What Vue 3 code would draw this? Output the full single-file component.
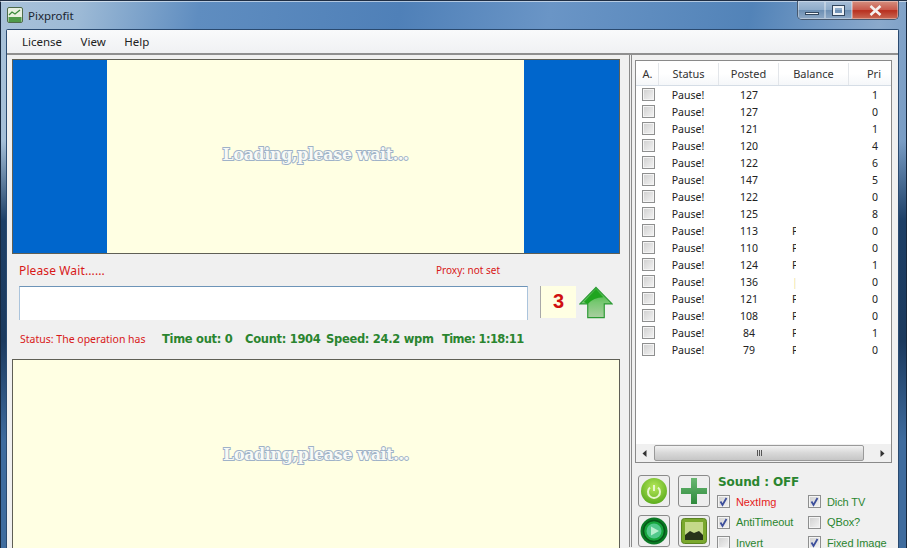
<script setup>
const rows = [
  ['127', '', '1'], ['127', '', '0'], ['121', '', '1'], ['120', '', '4'], ['122', '', '6'],
  ['147', '', '5'], ['122', '', '0'], ['125', '', '8'], ['113', 'P', '0'], ['110', 'P', '0'],
  ['124', 'P', '1'], ['136', 'y', '0'], ['121', 'P', '0'], ['108', 'P', '0'], ['84', 'P', '1'], ['79', 'P', '0']
]
const checks = [
  { label: 'NextImg', on: true, red: true },
  { label: 'Dich TV', on: true },
  { label: 'AntiTimeout', on: true },
  { label: 'QBox?', on: false },
  { label: 'Invert', on: false },
  { label: 'Fixed Image', on: true }
]
</script>

<template>
  <div class="window">
    <header class="titlebar">
      <svg class="appicon" width="16" height="16" viewBox="0 0 16 16">
        <rect x="0.5" y="0.5" width="15" height="15" rx="1.5" fill="#e8f0e0" stroke="#4d6b4a" />
        <rect x="1.5" y="10" width="13" height="5" fill="#4f9a4a" />
        <path d="M2 8 L5 5 L8 7 L13 3" fill="none" stroke="#3b8a3b" stroke-width="1.3" />
      </svg>
      <span class="apptitle">Pixprofit</span>
      <div class="caption">
        <div class="capbtn min"><i></i></div>
        <div class="capbtn max"><i></i></div>
        <div class="capbtn close">
          <svg width="13" height="11" viewBox="0 0 13 11"><path d="M1.5 1 L11.5 10 M11.5 1 L1.5 10" stroke="#f4f0ee" stroke-width="2.6" /></svg>
        </div>
      </div>
    </header>

    <div class="client">
      <nav class="menu"><span>License</span><span>View</span><span>Help</span></nav>
      <div class="body">
        <section class="left">
          <div class="adbox">
            <div class="adcream"><span class="loading">Loading,please wait...</span></div>
          </div>
          <div class="waitrow">
            <span class="wait">Please Wait......</span>
            <span class="proxy">Proxy: not set</span>
          </div>
          <div class="inputrow">
            <div class="input"></div>
            <div class="counter">3</div>
            <svg class="arrow" width="34" height="33" viewBox="0 0 35 33">
              <defs>
                <linearGradient id="arrowg" x1="0" y1="0" x2="0" y2="1">
                  <stop offset="0" stop-color="#2fae2f" />
                  <stop offset="0.5" stop-color="#78c872" />
                  <stop offset="1" stop-color="#a9cfa0" />
                </linearGradient>
              </defs>
              <path d="M17.5 1 L34 18 L26 18 L26 32 L9 32 L9 18 L1 18 Z" fill="url(#arrowg)" stroke="#2c9a34" stroke-width="1.2" />
              <path d="M9 18 Q15 11 25 11 L17.5 3 L5 16 Z" fill="#1fa51f" />
            </svg>
          </div>
          <div class="statusrow">
            <span class="status">Status: The operation has</span>
            <span class="stat timeout">Time out: 0</span>
            <span class="stat count">Count: 1904</span>
            <span class="stat speed">Speed: 24.2 wpm</span>
            <span class="stat time">Time: 1:18:11</span>
          </div>
          <div class="bottombox"><span class="loading">Loading,please wait...</span></div>
        </section>

        <aside class="right">
          <div class="list">
            <div class="thead">
              <span class="c-a">A.</span><span class="c-s">Status</span><span class="c-p">Posted</span><span class="c-b">Balance</span><span class="c-r">Pri</span>
            </div>
            <div class="tbody">
              <div v-for="(r, i) in rows" :key="i" class="row">
                <span class="c-a"><i class="cb"></i></span>
                <span class="c-s">Pause!</span>
                <span class="c-p">{{ r[0] }}</span>
                <span class="c-b"><em :class="{ pale: r[1] === 'y' }">{{ r[1] === 'y' ? '|' : r[1] }}</em></span>
                <span class="c-r">{{ r[2] }}</span>
              </div>
            </div>
            <div class="hscroll">
              <svg width="5" height="7" viewBox="0 0 5 7"><path d="M4.5 0 V7 L0.5 3.5 Z" fill="#333" /></svg>
              <div class="thumb"><b></b><b></b><b></b></div>
              <svg width="5" height="7" viewBox="0 0 5 7"><path d="M0.5 0 V7 L4.5 3.5 Z" fill="#333" /></svg>
            </div>
          </div>
          <div class="controls">
            <div class="btns">
              <div class="tool">
                <svg width="28" height="28" viewBox="0 0 28 28">
                  <defs><radialGradient id="pw" cx="0.5" cy="0.35" r="0.7"><stop offset="0" stop-color="#b6e85a" /><stop offset="1" stop-color="#55a818" /></radialGradient></defs>
                  <circle cx="14" cy="14" r="13" fill="url(#pw)" />
                  <path d="M10 10.5 A6 6 0 1 0 18 10.5" fill="none" stroke="#e7f7cf" stroke-width="2" />
                  <path d="M14 8 V14" stroke="#e7f7cf" stroke-width="2" />
                </svg>
              </div>
              <div class="tool">
                <svg width="28" height="28" viewBox="0 0 28 28">
                  <defs><linearGradient id="pl" x1="0" y1="0" x2="0" y2="1"><stop offset="0" stop-color="#6ab872" /><stop offset="1" stop-color="#2e8a3c" /></linearGradient></defs>
                  <path d="M11 1 H17 V11 H27 V17 H17 V27 H11 V17 H1 V11 H11 Z" fill="url(#pl)" />
                </svg>
              </div>
              <div class="tool">
                <svg width="28" height="28" viewBox="0 0 28 28">
                  <circle cx="14" cy="14" r="13.5" fill="#0b7a25" />
                  <circle cx="14" cy="14" r="10.5" fill="#16a53c" stroke="#07591a" stroke-width="1.5" />
                  <circle cx="14" cy="14" r="7.5" fill="#53c98c" />
                  <path d="M11 9.5 L19 14 L11 18.5 Z" fill="#b8efce" />
                </svg>
              </div>
              <div class="tool">
                <svg width="28" height="28" viewBox="0 0 28 28">
                  <rect x="1.5" y="1.5" width="25" height="25" rx="3" fill="#7aa82e" stroke="#5a8420" />
                  <rect x="5" y="5" width="18" height="18" fill="#c4d98a" />
                  <path d="M5 23 V18 L10 14 L14 16 L19 14 L23 18 V23 Z" fill="#27331a" />
                </svg>
              </div>
            </div>
            <div class="opts">
              <div class="sound">Sound : OFF</div>
              <div class="optgrid">
                <label v-for="c in checks" :key="c.label" class="opt" :class="{ red: c.red }">
                  <i class="cb" :class="{ on: c.on }">
                    <svg v-if="c.on" width="11" height="11" viewBox="0 0 11 11"><path d="M2.5 5.5 L4.5 9 L8.5 2" fill="none" stroke="#3d4f9c" stroke-width="1.8" /></svg>
                  </i>
                  <span>{{ c.label }}</span>
                </label>
              </div>
            </div>
          </div>
        </aside>
      </div>
    </div>
  </div>
</template>

<style>
html, body { margin: 0; padding: 0; overflow: hidden; }
</style>

<style scoped>
.window {
  width: 907px;
  height: 548px;
  box-sizing: border-box;
  overflow: hidden;
  padding: 0 8px 0 6px;
  font-family: "Liberation Sans", Arial, sans-serif;
  font-size: 12px;
  color: #222;
  background:
    linear-gradient(to right, #17283e 0, #17283e 1px, transparent 1px, transparent 906px, #17283e 906px),
    linear-gradient(to bottom, transparent 0, transparent 140px, #1d3f66 220px, #1c3a5e 340px, #3f6c9e 440px, #3f6c9e 100%),
    linear-gradient(100deg, #a9c2d9 0, #9dbad6 8%, #5f8dc0 20%, #4f80b8 40%, #6a95c6 55%, #5283b8 75%, #8aa9cc 88%, #5d88b8 100%);
  border-top: 1px solid #1f2e44;
  box-shadow: inset 0 1px 0 rgba(255, 255, 255, .55);
}
.titlebar { display: flex; align-items: center; height: 28px; padding-left: 1px; box-sizing: border-box; }
.apptitle { margin-left: 5px; font-size: 11.5px; color: #1b2530; font-family: "Noto Sans", sans-serif; }
.appicon { margin-top: -1px; }
.caption {
  margin-left: auto;
  margin-top: -9px;
  display: flex;
  height: 18px;
  border: 1px solid #46586e;
  border-top: 0;
  border-radius: 0 0 5px 5px;
  overflow: hidden;
}
.capbtn { display: flex; align-items: center; justify-content: center; box-shadow: inset 0 0 0 1px rgba(255, 255, 255, .35); }
.min, .max { width: 27px; background: linear-gradient(#a8bfd8 0, #8eabc9 50%, #6d8fb3 52%, #8ea9c6 100%); }
.max { width: 27px; }
.min i { width: 12px; height: 1px; margin-top: 6px; background: #f2f4f6; border: 1px solid #33475e; box-sizing: content-box; }
.max i { width: 7px; height: 5px; border: 2px solid #eef2f6; outline: 1px solid #33475e; }
.close { width: 46px; background: linear-gradient(#d59080 0, #c8584a 50%, #b8301f 53%, #c96a55 100%); }
.client {
  height: 519px;
  box-sizing: border-box;
  background: #f0f0f0;
  border: 1px solid #2a4a70;
  border-bottom: 0;
  border-radius: 2px 2px 0 0;
}
.menu {
  display: flex;
  gap: 18.5px;
  height: 25px;
  box-sizing: border-box;
  align-items: center;
  padding-left: 15px;
  background: linear-gradient(#f9fafb, #f0f1f3);
  border-bottom: 2px solid #8f8f8f;
  font-family: "Noto Sans", sans-serif;
  font-size: 11.5px;
  color: #222;
}
.body { display: flex; height: 492px; }
.left {
  width: 625px;
  box-sizing: border-box;
  padding: 4px 9px 0 5px;
  border-right: 3px double #8a8a8a;
  display: flex;
  flex-direction: column;
  flex: none;
}
.adbox {
  height: 195px;
  box-sizing: border-box;
  background: #0066cc;
  border: 1px solid #5f5f55;
  padding: 0 95px 0 94px;
  flex: none;
}
.adcream, .bottombox {
  background: #ffffe3;
  display: flex;
  align-items: center;
  justify-content: center;
}
.adcream { height: 100%; box-sizing: border-box; padding-bottom: 4px; }
.loading {
  font-family: "DejaVu Serif", serif;
  font-weight: 700;
  font-size: 15.8px;
  letter-spacing: -.3px;
  color: #f8faf6;
  -webkit-text-stroke: 1.9px #9fb2c8;
  paint-order: stroke fill;
  white-space: nowrap;
}
.waitrow { height: 32px; padding-left: 7px; display: flex; align-items: center; flex: none; }
.wait { color: #d81818; font-family: "Noto Sans", sans-serif; font-size: 12px; letter-spacing: .12px; }
.proxy { margin-left: auto; margin-right: 120px; color: #d81818; font-family: "Noto Sans", sans-serif; font-size: 10px; }
.inputrow { display: flex; padding-left: 7px; height: 35px; flex: none; align-items: flex-start; }
.input {
  width: 509px;
  height: 34px;
  box-sizing: border-box;
  background: #fff;
  border: 1px solid #abc4dc;
  border-top-color: #6d94b8;
  border-bottom: 0;
}
.counter {
  width: 36px;
  height: 32px;
  margin-left: 12px;
  box-sizing: border-box;
  background: #ffffe3;
  border-left: 1px solid #a8a8a8;
  color: #d01010;
  font-weight: 700;
  font-size: 20px;
  line-height: 31px;
  text-align: center;
  font-family: "Liberation Sans", sans-serif;
}
.arrow { margin-left: 3px; }
.statusrow { display: flex; align-items: center; height: 37px; padding-left: 8px; flex: none; white-space: nowrap; margin-top: -1px; }
.status { color: #d81818; font-family: "Noto Sans", sans-serif; font-size: 10.5px; width: 142px; }
.stat { color: #2a852f; font-family: "DejaVu Sans", sans-serif; font-size: 11.5px; font-weight: 700; letter-spacing: -.3px; }
.timeout { width: 83px; }
.count { width: 81px; }
.speed { width: 116px; }
.time { letter-spacing: -.6px; }
.bottombox { height: 220px; box-sizing: border-box; border: 1px solid #5f5f55; padding-bottom: 30px; flex: none; margin-top: 2px; }
.right { flex: 1; padding: 5px 0 0 3px; box-sizing: border-box; }
.list {
  width: 257px;
  height: 403px;
  box-sizing: border-box;
  background: #fff;
  border: 1px solid #8a8a8a;
  padding: 1px 0 0 0;
  display: flex;
  flex-direction: column;
  font-family: "Noto Sans", sans-serif;
  font-size: 10.5px;
}
.thead {
  display: flex;
  height: 23px;
  align-items: center;
  padding-left: 1px;
  border-bottom: 1px solid #d5dde6;
  background: linear-gradient(#fff 50%, #f5f7f9);
  font-size: 11px;
  color: #333;
  flex: none;
  overflow: hidden;
}
.thead span { box-sizing: border-box; text-align: center; line-height: 22px; border-right: 1px solid #e3e6ea; }
.thead span:last-child { border: 0; width: 50px; }
.c-a { width: 22px; flex: none; }
.c-s { width: 60px; flex: none; text-align: center; }
.c-p { width: 60px; flex: none; text-align: center; }
.c-b { width: 70px; flex: none; }
.c-r { width: 30px; flex: none; }
.tbody { flex: 1; }
.row { display: flex; height: 17px; align-items: center; color: #222; }
.row .c-a { display: flex; padding-left: 6px; box-sizing: border-box; }
.row .c-p { padding-left: 2px; box-sizing: border-box; }
.row .c-b { padding-left: 14px; box-sizing: border-box; }
.row .c-b em { display: block; width: 4px; height: 14px; overflow: hidden; font-style: normal; line-height: 14px; }
.row .c-b em.pale { color: #f0e6a8; }
.row .c-r { text-align: right; box-sizing: border-box; }
.cb {
  display: block;
  width: 13px;
  height: 13px;
  box-sizing: border-box;
  border: 1px solid #8e8f8f;
  background: linear-gradient(135deg, #cfcfcf, #f4f4f4);
  box-shadow: inset 0 0 0 1px #f4f4f4;
  flex: none;
}
.cb svg { display: block; margin: 0; }
.hscroll {
  height: 18px;
  flex: none;
  display: flex;
  align-items: center;
  gap: 7px;
  padding: 0 6px;
  background: #f0f0f0;
}
.thumb {
  flex: 1;
  height: 14px;
  margin-right: 9px;
  border: 1px solid #9a9a9a;
  border-radius: 2px;
  background: linear-gradient(#f2f2f2, #d8d8d8 50%, #c6c6c6);
  display: flex;
  align-items: center;
  justify-content: center;
  gap: 1px;
}
.thumb b { width: 1px; height: 6px; background: #555; }
.controls { display: flex; margin-top: 12px; }
.btns { display: grid; grid-template-columns: 32px 32px; gap: 8px 8px; margin-left: 3px; align-content: start; }
.tool {
  width: 32px;
  height: 32px;
  box-sizing: border-box;
  border: 1px solid #8a8a8a;
  border-radius: 3px;
  background: #eee;
  display: flex;
  align-items: center;
  justify-content: center;
}
.opts { margin-left: 8px; }
.sound { color: #2a852f; font-weight: 700; font-size: 12px; font-family: "DejaVu Sans", sans-serif; letter-spacing: -.1px; height: 20px; line-height: 15px; }
.optgrid { display: grid; grid-template-columns: 91px 80px; row-gap: 7.5px; margin-left: -1px; }
.opt { display: flex; align-items: center; gap: 6px; height: 13px; color: #2a852f; font-family: "Liberation Sans", sans-serif; font-size: 11px; letter-spacing: -.1px; white-space: nowrap; }
.opt.red { color: #e51c1c; }
</style>
